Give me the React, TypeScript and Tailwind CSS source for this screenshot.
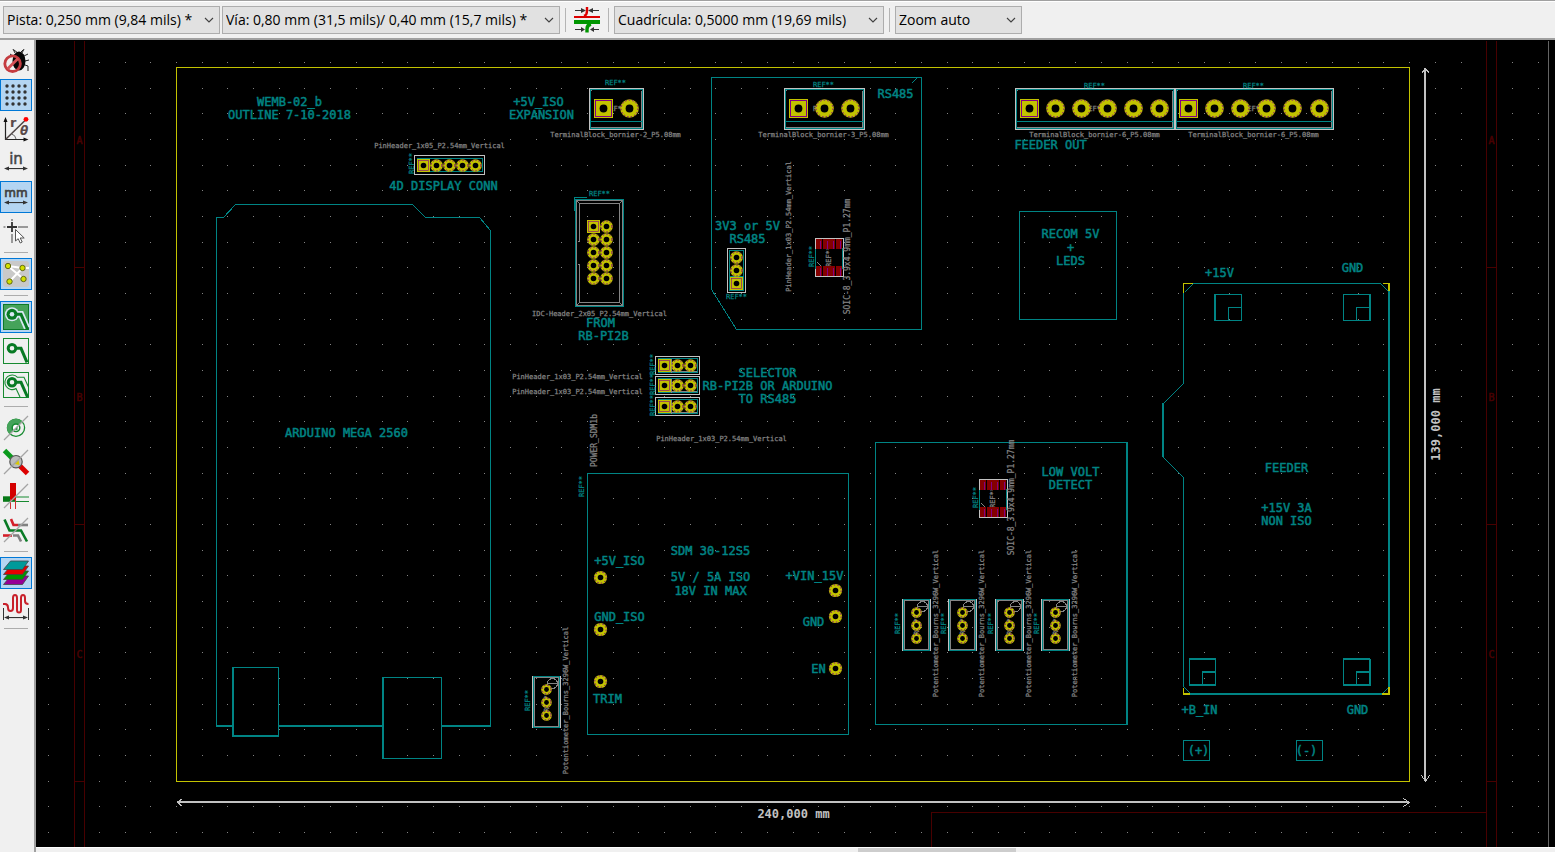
import React from 'react';

const TEAL = '#008484';
const GRAY = '#848484';
const WHITE = '#c2c2c2';
const YELLOW = '#c2c200';
const PURPLE = '#840084';
const MAROON = '#480000';

/* ---------- top bar ---------- */

function Combo({ label, options, className }: { label: string; options: string[]; className: string }) {
  return (
    <div className={'relative h-7 ' + className}>
      <select
        aria-label={label}
        className="h-full w-full appearance-none border border-[#adadad] bg-[#e1e1e1] pl-[3px] pr-5 text-[14px] leading-5 text-black outline-none"
      >
        {options.map((o) => (
          <option key={o}>{o}</option>
        ))}
      </select>
      <svg className="pointer-events-none absolute right-[6px] top-[10px]" width="10" height="8" viewBox="0 0 10 8">
        <path d="M1 2l4 4 4-4" fill="none" stroke="#404040" strokeWidth="1.1" />
      </svg>
    </div>
  );
}

const Sep = () => <div className="h-6 w-px bg-[#b4b4b4]" />;

function TrackWidthIcon() {
  return (
    <svg width="28" height="28" viewBox="0 0 28 28">
      <g stroke="#333" strokeWidth="1" fill="#333">
        <path d="M2 4.500h7M26 4.500h-7M2 23.500h7M26 23.500h-7" />
        <path d="M8 2l5 2.500-5 2.500zM20 2l-5 2.500 5 2.500zM8 21l4 2.500-4 2.500zM21 21l-4 2.500 4 2.500z" stroke="none" />
      </g>
      <path d="M14 1v4q0 4-3 5" fill="none" stroke="#dc0000" strokeWidth="2.400" />
      <rect x="1" y="10" width="26" height="2" fill="#dc0000" />
      <rect x="1" y="14" width="26" height="4" fill="#009600" />
      <path d="M18 18q-4 1-4 5v3.500" fill="none" stroke="#009600" strokeWidth="3.400" />
    </svg>
  );
}

/* ---------- left bar icons ---------- */

const Slash = () => <path d="M4 28L28 4" stroke="#a4a4a4" strokeWidth="1.3" fill="none" />;

const DimArrow = ({ y }: { y: number }) => (
  <g fill="#333">
    <rect x="6" y={y - 0.5} width="20" height="1.1" />
    <path d={`M4 ${y}l5-2v4zM28 ${y}l-5-2v4z`} />
  </g>
);

const icons: Record<string, React.ReactNode> = {
  drc: (
    <g>
      <g stroke="#222" strokeWidth="1" fill="none">
        <path d="M15 8l-2-4M22 8l2-4M13 11l-3-2M24 11l4-2M25 16l4-1M25 20l3 1v5M14 5l4 3M23 5l-3 3" />
      </g>
      <ellipse cx="19" cy="16" rx="6.500" ry="9.500" fill="#050505" />
      <circle cx="12.600" cy="18.700" r="7.800" fill="none" stroke="#c43c40" strokeWidth="2.800" />
      <path d="M7.500 24L18 13.500" stroke="#d45055" strokeWidth="2.800" />
    </g>
  ),
  grid: (
    <g fill="#333">
      {[7, 13, 19, 25].map((y) => [7, 13, 19, 25].map((x) => <circle key={`${x}-${y}`} cx={x} cy={y} r="1.700" />))}
    </g>
  ),
  polar: (
    <g>
      <path d="M5.500 6v20.500H26" fill="none" stroke="#222" strokeWidth="1.200" />
      <path d="M5.500 4l2 5h-4zM28.500 26.500l-5-2v4z" fill="#111" />
      <path d="M5.500 26.500L26 6.500" stroke="#4d4444" strokeWidth="1.500" />
      <path d="M11.500 21q4 1 4.500 5" fill="none" stroke="#666" strokeWidth="1" />
      <circle cx="26" cy="6.300" r="2.400" fill="#f00" />
      <text x="10" y="14" fontSize="13" fontWeight="700" fill="#5a4a4a" fontFamily="DejaVu Sans, sans-serif">r</text>
      <text x="20" y="22" fontSize="12" fontWeight="700" fontStyle="italic" fill="#5a4a4a" fontFamily="DejaVu Sans, sans-serif">θ</text>
    </g>
  ),
  inch: (
    <g>
      <text x="16" y="17" textAnchor="middle" fontSize="15" fill="#444" stroke="#444" strokeWidth=".5" fontFamily="DejaVu Sans, sans-serif">in</text>
      <DimArrow y={21.5} />
    </g>
  ),
  mm: (
    <g>
      <text x="16" y="16" textAnchor="middle" fontSize="12" fill="#444" stroke="#444" strokeWidth=".7" fontFamily="DejaVu Sans, sans-serif">mm</text>
      <DimArrow y={21.5} />
    </g>
  ),
  cursor: (
    <g>
      <path d="M12 4v2M12 19v9M3.500 12h2M18 12h10" stroke="#999" strokeWidth="2" />
      <path d="M12 7v10M7 12h10" stroke="#333" strokeWidth="1.800" />
      <path d="M15.500 14.500v11.500l2.700-2.300 2 4.300 2-1-2-4h4z" fill="#fff" stroke="#555" strokeWidth="1" />
    </g>
  ),
  ratsnest: (
    <g>
      <rect x="3" y="3" width="26" height="26" rx="3" fill="#c9c9c9" />
      <path d="M8 8l15.500 13M9.500 23.500L22.500 10M8 8l14.500 2H29" stroke="#fff" strokeWidth="2" fill="none" />
      <g fill="#d2e000" stroke="#555b10" strokeWidth=".9">
        <circle cx="8" cy="8" r="2.700" />
        <circle cx="22.500" cy="10" r="2.700" />
        <circle cx="9.500" cy="23.500" r="2.700" />
        <circle cx="23.500" cy="21" r="2.700" />
      </g>
    </g>
  ),
  zoneFill: (
    <g fill="none">
      <rect x="3.500" y="3.500" width="25" height="25" fill="#45a35a" stroke="#0c7a28" />
      <circle cx="12" cy="13.300" r="7" fill="#d9e8f4" />
      <path d="M12 13.300h9l6 13.700" stroke="#d9e8f4" strokeWidth="6.500" />
      <circle cx="12" cy="13.300" r="5.500" fill="#087a24" />
      <path d="M15 13.300h6l6.500 14.700" stroke="#087a24" strokeWidth="3" />
      <circle cx="12" cy="13.300" r="2.300" fill="#d9e8f4" />
    </g>
  ),
  zoneHide: (
    <g fill="none">
      <rect x="3.500" y="3.500" width="25" height="25" stroke="#168a30" />
      <circle cx="12" cy="13.300" r="3.800" stroke="#087a24" strokeWidth="3" />
      <path d="M15 13.300h6l6 14" stroke="#087a24" strokeWidth="3" />
    </g>
  ),
  zoneOutline: (
    <g fill="none">
      <rect x="3.500" y="3.500" width="25" height="25" stroke="#168a30" />
      <path d="M20 28l-4-8.500A7.300 7.300 0 1 1 17.500 8.300H24L28.500 18" stroke="#168a30" strokeWidth="1.100" />
      <circle cx="12" cy="13.300" r="3.800" stroke="#087a24" strokeWidth="3" />
      <path d="M15 13.300h6l6.500 14.700" stroke="#087a24" strokeWidth="3" />
    </g>
  ),
  via: (
    <g fill="none">
      <circle cx="16" cy="15.700" r="8.600" stroke="#168a30" strokeWidth="1.300" />
      <path d="M9.600 22.200A9 9 0 0 1 22.400 9.300z" fill="#45a35a" />
      <circle cx="16" cy="15.700" r="3.800" fill="#fff" stroke="#168a30" strokeWidth="1.500" />
      <path d="M14.500 17.500l3-3.500v4z" fill="#168a30" />
      <Slash />
    </g>
  ),
  track: (
    <g>
      <path d="M4.500 4.500L13 13" stroke="#0a9a1c" strokeWidth="5" />
      <path d="M18 18l9.500 9.500" stroke="#dc0000" strokeWidth="5" />
      <circle cx="16" cy="15.700" r="6.200" fill="#bcbcbc" stroke="#555" strokeWidth="1.200" />
      <path d="M14.500 18l4-4 1 5z" fill="#d8c800" />
      <Slash />
    </g>
  ),
  contrast: (
    <g>
      <rect x="3" y="16.300" width="12" height="5.500" fill="#087a18" />
      <path d="M16 17h13M16 21.500h13" stroke="#168a30" strokeWidth="1.200" />
      <rect x="10" y="3" width="6" height="17" fill="#d40000" />
      <path d="M10.500 19v10M15.500 19v10" stroke="#d43030" strokeWidth="1" />
      <Slash />
    </g>
  ),
  diff: (
    <g fill="none" strokeWidth="2.600">
      <path d="M11 5l2.500 6H18" stroke="#d4202a" />
      <path d="M18 11h10" stroke="#808080" />
      <path d="M4.500 5.500L9.500 16.500H21l6 11" stroke="#087a24" />
      <path d="M3 21.500h9" stroke="#d4202a" />
      <path d="M13 21.500h5l3 6" stroke="#808080" />
      <Slash />
    </g>
  ),
  layers: (
    <g stroke="#444" strokeWidth=".8">
      <path d="M10.500 19h18l-6 8.500h-19z" fill="#960096" />
      <path d="M10.500 14h18l-6 8.500h-19z" fill="#009600" />
      <path d="M10.500 9h18l-6 8.500h-19z" fill="#e60000" />
      <path d="M10.500 4h18l-6 8.500h-19z" fill="#009a9a" />
    </g>
  ),
  microwave: (
    <g>
      <path
        d="M3 13h2q3 0 3 3.500t2.500 3.500 2.500-3V7q0-3 2-3t2 3v12q0 2.500 2 2.500t2-2.500V7q0-3 2-3t2 3v3q0 3 3.500 3"
        fill="none"
        stroke="#c8202a"
        strokeWidth="2"
      />
      <path d="M3.500 17v12M28.500 17v12" stroke="#333" strokeWidth="1" />
      <DimArrow y={26.5} />
    </g>
  ),
};

const tools: (null | [string, string, boolean])[] = [
  ['drc', 'DRC desactivado', false],
  ['grid', 'Mostrar cuadrícula', true],
  ['polar', 'Coordenadas polares', false],
  ['inch', 'Unidades en pulgadas', false],
  ['mm', 'Unidades en milímetros', true],
  ['cursor', 'Forma del cursor', false],
  null,
  ['ratsnest', 'Mostrar líneas de conexión', true],
  null,
  ['zoneFill', 'Mostrar zonas rellenas', true],
  ['zoneHide', 'Ocultar zonas rellenas', false],
  ['zoneOutline', 'Mostrar contornos de zonas', false],
  null,
  ['via', 'Vías en modo contorno', false],
  ['track', 'Pistas en modo contorno', false],
  ['contrast', 'Modo de alto contraste', false],
  ['diff', 'Modo de pistas', false],
  null,
  ['layers', 'Gestor de capas', true],
  ['microwave', 'Herramientas de microondas', false],
  null,
];

function SideBar() {
  return (
    <nav className="flex w-9 shrink-0 flex-col gap-[2px] border-r-2 border-[#a0a0a0] bg-[#f0f0f0] pt-[5px]">
      {tools.map((t, i) =>
        t ? (
          <button
            key={t[0]}
            aria-label={t[1]}
            aria-pressed={t[2]}
            className={'h-8 w-8 shrink-0 border ' + (t[2] ? 'border-[#0078d7] bg-[#b4d5f2]' : 'border-transparent')}
          >
            <svg width="30" height="30" viewBox="1 1 30 30">
              {icons[t[0]]}
            </svg>
          </button>
        ) : (
          <div key={i} className="my-[3px] ml-1 h-px w-6 shrink-0 bg-[#acacac]" />
        ),
      )}
    </nav>
  );
}

/* ---------- board primitives ---------- */

type TProps = { x: number; y: number; c?: string; s?: number; bold?: boolean; v?: boolean; children: string };

/* Horizontal: x is the centre and y the baseline. Vertical: x,y is the centre. */
function T({ x, y, c = TEAL, s = 12, bold, v, children }: TProps) {
  const cap = Math.round(s * 0.36);
  return (
    <text
      transform={v ? `translate(${x + cap - 1} ${y - 1}) rotate(-90)` : `translate(${x - 1} ${y - 1})`}
      textAnchor="middle"
      fontSize={s}
      fontWeight={bold ? 700 : 400}
      fill={c}
      stroke={c}
      strokeWidth={bold ? 0 : s > 8 ? 0.5 : 0.25}
    >
      {children}
    </text>
  );
}

const Name = (p: { x: number; y: number; v?: boolean; s?: number; children: string }) => <T c={GRAY} s={p.s ?? 7} x={p.x} y={p.y} v={p.v}>{p.children}</T>;
const Ref = ({ x, y, v, c = TEAL }: { x: number; y: number; v?: boolean; c?: string }) => <T c={c} s={7} x={x} y={y} v={v}>REF**</T>;

function Box({ x, y, r, b, c = TEAL }: { x: number; y: number; r: number; b: number; c?: string }) {
  return <rect x={x} y={y} width={r - x} height={b - y} fill="none" stroke={c} strokeWidth={1} />;
}

/* Two-pixel line that covers the named pixel and the one before it. */
function Thick({ d, c = TEAL }: { d: string; c?: string }) {
  return <path d={d} transform="translate(-.5 -.5)" stroke={c} strokeWidth="2" />;
}

function Pad({ x, y, r, square }: { x: number; y: number; r: number; square?: boolean }) {
  return (
    <g shapeRendering="auto">
      {square ? (
        <>
          <rect x={x - r - 0.5} y={y - r - 0.5} width={2 * r + 1} height={2 * r + 1} fill={YELLOW} />
          <rect x={x - r + 1} y={y - r + 1} width={2 * r - 2} height={2 * r - 2} fill="none" stroke={PURPLE} strokeWidth={r > 8 ? 1 : 0.6} />
        </>
      ) : (
        <>
          <circle cx={x} cy={y} r={r + 0.3} fill={YELLOW} />
          <circle cx={x} cy={y} r={r - 0.6} fill="none" stroke={PURPLE} strokeWidth="1" strokeDasharray="1.500 2" />
        </>
      )}
      <circle cx={x} cy={y} r={r > 8 ? 3.9 : r > 5 ? 2.8 : 2.4} fill="#000" />
    </g>
  );
}

function Terminal({ x, r, pads, name, refY = 88 }: { x: number; r: number; pads: number[]; name: string; refY?: number }) {
  const cx = Math.round((x + r) / 2);
  return (
    <g>
      <Box x={x} y={88} r={r} b={129} c={WHITE} />
      <Box x={x + 2} y={90} r={r - 2} b={127} c={GRAY} />
      <Box x={x + 1} y={89} r={r - 1} b={128} />
      <path d={`M${x + 2} 90V126M${x + 2} 90H${r - 2}`} stroke="#000" />
      <path d={`M${x + 1} 121H${r - 1}`} stroke={TEAL} />
      <Ref x={cx} y={111} c={GRAY} />
      {pads.map((p, i) => (
        <Pad key={p} x={p} y={108} r={9} square={i === 0} />
      ))}
      <Ref x={cx} y={refY} />
      <Name x={cx} y={137}>{name}</Name>
    </g>
  );
}

function Header3({ y }: { y: number }) {
  return (
    <g>
      <Box x={655} y={y - 9} r={699} b={y + 9} c={WHITE} />
      <Box x={658} y={y - 7} r={697} b={y + 7} />
      <path d={`M671 ${y - 7}v14M658 ${y + 6}h38`} stroke={GRAY} />
      <Pad x={664} y={y} r={6} square />
      <Pad x={677} y={y} r={6} />
      <Pad x={690} y={y} r={6} />
      <Ref x={652} y={y} v />
    </g>
  );
}

function Soic({ x, y }: { x: number; y: number }) {
  return (
    <g>
      <Box x={x} y={y} r={x + 28} b={y + 38} c={WHITE} />
      <path d={`M${x + 2} ${y + 24}l4 4`} stroke={GRAY} />
      <path d={`M${x} ${y + 10}v20M${x + 27} ${y + 9}v21`} stroke={TEAL} />
      <Ref x={x + 13} y={y + 19} v c={GRAY} />
      {[1, 28].map((dy) =>
        [1, 8, 14, 21].map((dx) => (
          <g key={`${dx}-${dy}`}>
            <rect x={x + dx - 0.5} y={y + dy - 0.5} width="6" height="10" fill="#840000" />
            <path d={`M${x + dx + 4} ${y + dy + 1}v8`} stroke={PURPLE} />
          </g>
        )),
      )}
      <Ref x={x - 4} y={y + 19} v />
      <Name x={x + 32} y={y + 19} v s={8}>SOIC-8_3.9x4.9mm_P1.27mm</Name>
    </g>
  );
}

function Pot({ x, y }: { x: number; y: number }) {
  return (
    <g>
      <Box x={x} y={y} r={x + 28} b={y + 51} c={WHITE} />
      <Box x={x + 1} y={y} r={x + 27} b={y + 51} />
      <Box x={x + 2} y={y + 1} r={x + 26} b={y + 50} c={GRAY} />
      <circle cx={x + 20} cy={y + 7} r="5" fill="none" stroke={GRAY} />
      <path d={`M${x + 15} ${y + 7}h10`} stroke={GRAY} />
      <Ref x={x + 14} y={y + 26} v c={GRAY} />
      {[13, 26, 39].map((d) => (
        <Pad key={d} x={x + 14} y={y + d} r={5} />
      ))}
      <Ref x={x - 5} y={y + 25} v />
      <Name x={x + 33} y={y + 25} v>Potentiometer_Bourns_3296W_Vertical</Name>
    </g>
  );
}

function Corner({ x, y }: { x: number; y: number }) {
  return (
    <g>
      <Box x={x} y={y} r={x + 26} b={y + 26} />
      <Box x={x + 13} y={y + 13} r={x + 26} b={y + 26} />
    </g>
  );
}

function GridDots() {
  const dots: React.ReactNode[] = [];
  for (let i = -5; i < 55; i++) {
    const x = Math.round(176 + i * 25.69);
    if (x === 73 || x === 74) continue;
    for (let j = 0; j < 31; j++) {
      dots.push(<rect key={`${i}-${j}`} x={x - 0.5} y={Math.round(62 + j * 25.67) - 0.5} width="1" height="1" />);
    }
  }
  return <g fill={GRAY}>{dots}</g>;
}

function Board() {
  return (
    <svg className="block h-full w-full" role="img" aria-label="Placa WEMB-02_b" fontFamily='"DejaVu Sans Mono", monospace'>
      <g transform="translate(-35.5 -39.5)" shapeRendering="crispEdges" fill="none">
        <GridDots />

        {/* sheet frame */}
        <path
          d="M74 40V850M84 40V850M1486 40V850M1496 40V850M74 267h10M74 524h10M74 781h10M1486 267h10M1486 524h10M1486 781h10M931 850V812H1486"
          stroke={MAROON}
        />
        {['A', 'B', 'C'].map((l, i) => (
          <g key={l}>
            <T x={80} y={144 + i * 257} c={MAROON} s={10}>{l}</T>
            <T x={1492} y={144 + i * 257} c={MAROON} s={10}>{l}</T>
          </g>
        ))}
        <path d="M1548 40V850" stroke="#646464" />

        {/* edge cuts and dimensions */}
        <Box x={176} y={67} r={1409} b={781} c={YELLOW} />
        <Thick d="M177 802H1409M1425 68V781" c={WHITE} />
        <path d="M182 798l-5 4 5 4M1403 798l6 4-6 4M1421 73l4-5 4 5M1421 775l4 6 4-6" stroke={WHITE} />
        <T x={794} y={818} c={WHITE} bold>240,000 mm</T>
        <T x={1436} y={425} c={WHITE} bold v>139,000 mm</T>

        {/* Arduino */}
        <path d="M216 726V217H223L235 204H412L425 217H479L490 230V726" stroke={TEAL} />
        <Thick d="M216 726H233M278 726H383M441 726H491" />
        <Box x={233} y={667} r={278} b={736} />
        <Box x={383} y={677} r={441} b={758} />
        <Thick d="M233 667V736H279M383 677V759" />
        <T x={347} y={437}>ARDUINO MEGA 2560</T>

        <T x={290} y={106}>WEMB-02_b</T>
        <T x={290} y={119}>OUTLINE 7-10-2018</T>
        <T x={539} y={106}>+5V_ISO</T>
        <T x={542} y={119}>EXPANSION</T>

        <Terminal x={589} r={643} pads={[603, 629]} name="TerminalBlock_bornier-2_P5.08mm" refY={85} />
        <Terminal x={784} r={864} pads={[798, 824, 850]} name="TerminalBlock_bornier-3_P5.08mm" refY={87} />
        <Terminal x={1015} r={1174} pads={[1029, 1055, 1081, 1107, 1133, 1159]} name="TerminalBlock_bornier-6_P5.08mm" />
        <Terminal x={1175} r={1333} pads={[1188, 1214, 1240, 1266, 1292, 1319]} name="TerminalBlock_bornier-6_P5.08mm" />
        <T x={1051} y={149}>FEEDER OUT</T>

        {/* display connector */}
        <Name x={440} y={148}>PinHeader_1x05_P2.54mm_Vertical</Name>
        <Ref x={411} y={164} v />
        <Box x={414} y={155} r={484} b={174} c={WHITE} />
        <Box x={417} y={158} r={482} b={171} />
        {[423, 436, 449, 462, 475].map((x, i) => (
          <Pad key={x} x={x} y={165} r={6} square={i === 0} />
        ))}
        <T x={444} y={190}>4D DISPLAY CONN</T>

        {/* IDC header */}
        <Ref x={600} y={196} />
        <Box x={575} y={199} r={623} b={306} />
        <Box x={576} y={200} r={622} b={305} c={GRAY} />
        <path d="M577 241h2V203H619V302H579V264h-2M576 200l3 3M622 200l-3 3M576 305l3-3M622 305l-3-3" stroke={GRAY} />
        <path d="M586 197H574V210" stroke={TEAL} />
        {[226, 239, 252, 265, 278].map((y, i) => (
          <g key={y}>
            <Pad x={593} y={y} r={6} square={i === 0} />
            <Pad x={606} y={y} r={6} />
          </g>
        ))}
        <Name x={600} y={316}>IDC-Header_2x05_P2.54mm_Vertical</Name>
        <T x={601} y={327}>FROM</T>
        <T x={604} y={340}>RB-PI2B</T>

        {/* RS485 block */}
        <path d="M711 77H921V329H736L711 289ZM911 83l6-6" stroke={TEAL} />
        <T x={896} y={98}>RS485</T>
        <T x={748} y={230}>3V3 or 5V</T>
        <T x={748} y={243}>RS485</T>
        <Box x={727} y={248} r={745} b={292} c={WHITE} />
        <Box x={729} y={250} r={743} b={290} />
        <path d="M729 276h14" stroke={TEAL} />
        <Pad x={736} y={257} r={6} />
        <Pad x={736} y={270} r={6} />
        <Pad x={736} y={283} r={6} square />
        <Ref x={737} y={299} />
        <Name x={788} y={227} v>PinHeader_1x03_P2.54mm_Vertical</Name>
        <Soic x={815} y={238} />

        {/* selector headers */}
        <Header3 y={365} />
        <Header3 y={385} />
        <Header3 y={406} />
        <Name x={578} y={379}>PinHeader_1x03_P2.54mm_Vertical</Name>
        <Name x={578} y={394}>PinHeader_1x03_P2.54mm_Vertical</Name>
        <Name x={722} y={441}>PinHeader_1x03_P2.54mm_Vertical</Name>
        <T x={768} y={377}>SELECTOR</T>
        <T x={768} y={390}>RB-PI2B OR ARDUINO</T>
        <T x={768} y={403}>TO RS485</T>

        {/* SDM converter */}
        <Name x={594} y={441} v s={8}>POWER_SDM1b</Name>
        <Ref x={581} y={487} v />
        <Box x={587} y={473} r={848} b={734} />
        <T x={711} y={555}>SDM 30-12S5</T>
        <T x={711} y={581}>5V / 5A ISO</T>
        <T x={711} y={595}>18V IN MAX</T>
        <T x={620} y={565}>+5V_ISO</T>
        <T x={620} y={621}>GND_ISO</T>
        <T x={608} y={703}>TRIM</T>
        <T x={815} y={580}>+VIN_15V</T>
        <T x={814} y={626}>GND</T>
        <T x={819} y={673}>EN</T>
        {[[600, 577], [600, 629], [600, 681], [835, 590], [835, 616], [835, 668]].map(([x, y]) => (
          <Pad key={`${x}-${y}`} x={x} y={y} r={6.3} />
        ))}
        <Pot x={532} y={676} />

        {/* low voltage detector */}
        <Box x={875} y={442} r={1127} b={724} />
        <Thick d="M1127 442V725" />
        <T x={1071} y={476}>LOW VOLT</T>
        <T x={1071} y={489}>DETECT</T>
        <Soic x={979} y={479} />
        <Pot x={902} y={599} />
        <Pot x={948} y={599} />
        <Pot x={995} y={599} />
        <Pot x={1041} y={599} />

        {/* RECOM */}
        <Box x={1019} y={211} r={1116} b={319} />
        <T x={1071} y={238}>RECOM 5V</T>
        <T x={1071} y={252}>+</T>
        <T x={1071} y={265}>LEDS</T>

        {/* feeder */}
        <path d="M1183 292V383L1163 403V457L1183 477V686M1192 283H1380M1184 292l9-9M1380 283l9 9M1183 686l8 8M1389 686l-8 8" stroke={TEAL} />
        <Thick d="M1389 290V688M1190 694H1382M1163 403V457" />
        <path d="M1183 292V283H1192M1382 283H1389M1183 687V693" stroke={YELLOW} />
        <Thick d="M1389 283V291M1389 687V694H1382M1183 694H1190" c={YELLOW} />
        <T x={1220} y={277}>+15V</T>
        <T x={1353} y={272}>GND</T>
        <Corner x={1215} y={294} />
        <Corner x={1343} y={294} />
        <Corner x={1189} y={659} />
        <Corner x={1343} y={659} />
        <Thick d="M1215 294v27M1370 294v27M1370 659v27M1189 659h27M1343 659h27M1189 685h27M1343 685h27M1202 672h14M1356 672h14" />
        <T x={1287} y={472}>FEEDER</T>
        <T x={1287} y={512}>+15V 3A</T>
        <T x={1287} y={525}>NON ISO</T>
        <T x={1200} y={714}>+B_IN</T>
        <T x={1358} y={714}>GND</T>
        <Box x={1183} y={740} r={1209} b={760} />
        <Box x={1296} y={740} r={1322} b={760} />
        <T x={1199} y={755}>(+)</T>
        <T x={1307} y={755}>(-)</T>
      </g>
    </svg>
  );
}

export default function App() {
  return (
    <div className="flex h-screen flex-col overflow-hidden bg-[#f0f0f0] font-['Open_Sans','Noto_Sans',sans-serif]">
      <header className="flex h-10 shrink-0 items-start border-b-2 border-t border-[#a0a0a0] pl-[3px] pt-[5px] shadow-[inset_0_1px_0_#fff]">
        <Combo label="Pista" options={['Pista: 0,250 mm (9,84 mils) *']} className="w-[217px]" />
        <Combo label="Vía" options={['Vía: 0,80 mm (31,5 mils)/ 0,40 mm (15,7 mils) *']} className="ml-[2px] w-[338px]" />
        <div className="flex h-7 items-center gap-[7px] px-[5px]">
          <Sep />
          <button aria-label="Anchura de pista automática" className="h-7 w-7">
            <TrackWidthIcon />
          </button>
          <Sep />
        </div>
        <Combo label="Cuadrícula" options={['Cuadrícula: 0,5000 mm (19,69 mils)']} className="w-[270px]" />
        <div className="flex h-7 items-center px-[5px]">
          <Sep />
        </div>
        <Combo label="Zoom" options={['Zoom auto']} className="w-[127px]" />
      </header>
      <div className="flex min-h-0 flex-1">
        <SideBar />
        <main className="flex min-w-0 flex-1 flex-col">
          <div className="min-h-0 flex-1 bg-black">
            <Board />
          </div>
          <div className="flex h-[5px] shrink-0 border-t border-white bg-[#f0f0f0]">
            <div className="ml-[54.1%] w-[158px] bg-[#cdcdcd]" />
          </div>
        </main>
      </div>
    </div>
  );
}
